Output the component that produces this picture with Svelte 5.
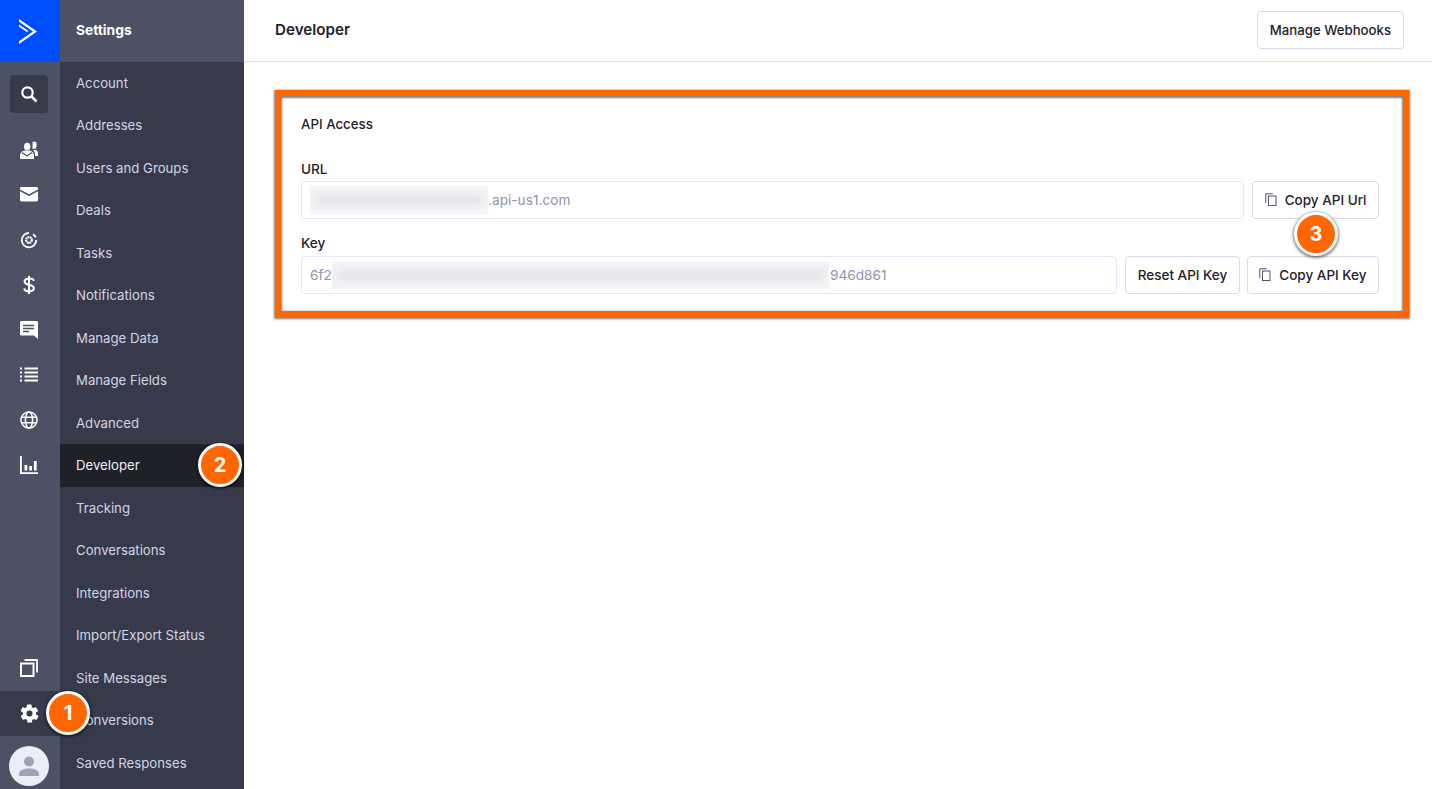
<script>
	const menu = [
		'Account', 'Addresses', 'Users and Groups', 'Deals', 'Tasks', 'Notifications',
		'Manage Data', 'Manage Fields', 'Advanced', 'Developer', 'Tracking', 'Conversations',
		'Integrations', 'Import/Export Status', 'Site Messages', 'Conversions', 'Saved Responses'
	];
</script>

<div class="page">
	<!-- icon rail -->
	<nav class="rail">
		<div class="logo">
			<svg width="18" height="25" viewBox="0 0 18 25" fill="#fff"><path d="M0 0 18 12.500 0 25v-2.800L14 12.500 0 2.800z"/><path d="M0 5.500 9.500 12 8 13 0 7.800z"/></svg>
		</div>
		<div class="search">
			<svg width="18" height="18" viewBox="0 0 18 18"><circle cx="7.500" cy="7.500" r="5.200" fill="none" stroke="#fff" stroke-width="2.200"/><path d="m11.500 11.500 5 5" stroke="#fff" stroke-width="2.600"/></svg>
		</div>
		<div class="rail-icons">
			<div class="ri"><svg width="18" height="18" viewBox="0 0 18 18" fill="#fff"><ellipse cx="7.200" cy="5.600" rx="3.200" ry="3.800"/><path d="M0 18v-3c0-3 2-5 4.500-5.500h5.400C12 10 14 12 14 15v3z"/><path d="M2 11.500 7 15l5-3.500" fill="none" stroke="#4c5166" stroke-width="1.200"/><path d="M12.500 1c2-1.200 4.200-.6 4.200 2.400 0 1.800-.6 3.200-1.200 4.400h-3.200c.4-2.400.4-4.600.2-6.800z"/><path d="M15.500 9c1.500.3 2.500 1.400 2.500 3v3h-2.800c-.1-2.200-.6-4.200-1.800-6z"/></svg></div>
			<div class="ri"><svg width="18" height="14.400" viewBox="0 0 20 16" fill="#fff"><path d="M1.500 0h17A1.500 1.500 0 0 1 20 1.500v1.200L10 8 0 2.700V1.500A1.500 1.500 0 0 1 1.500 0z"/><path d="M0 4.800 10 10l10-5.200v9.700a1.500 1.500 0 0 1-1.500 1.500h-17A1.500 1.500 0 0 1 0 14.500z"/></svg></div>
			<div class="ri"><svg width="18" height="18" viewBox="0 0 20 20"><path d="M10 2.200A8 8 0 1 0 18 10" fill="none" stroke="#fff" stroke-width="2"/><path d="M14.500 3.500A8 8 0 0 1 17.500 7" fill="none" stroke="#fff" stroke-width="2"/><circle cx="10" cy="10" r="3.200" fill="none" stroke="#fff" stroke-width="2.400" stroke-dasharray="2 .6"/></svg></div>
			<div class="ri"><svg width="12" height="18" viewBox="0 0 14 21"><path d="M12.500 5.800C12.300 3.800 10 3 7.200 3 4 3 1.800 4.200 1.800 6.400c0 5 10.800 2.800 10.800 8 0 2.400-2.400 3.600-5.500 3.600-3 0-5.300-1.200-5.600-3.500M7 0v21" fill="none" stroke="#fff" stroke-width="2.400"/></svg></div>
			<div class="ri"><svg width="18" height="18" viewBox="0 0 18 18"><path d="M1.500 0h15A1.500 1.500 0 0 1 18 1.500V18l-4-3.500H1.500A1.500 1.500 0 0 1 0 13V1.500A1.500 1.500 0 0 1 1.500 0z" fill="#fff"/><path d="M3 4.500h11M3 7.500h11M3 10.500h6" stroke="#4c5166" stroke-width="1.600"/></svg></div>
			<div class="ri"><svg width="18" height="15" viewBox="0 0 18 15"><path d="M4.500 1.500H18M4.500 5.500H18M4.500 9.500H18M4.500 13.500H18" stroke="#fff" stroke-width="2"/><path d="M0 1.500h2M0 5.500h2M0 9.500h2M0 13.500h2" stroke="#fff" stroke-width="2"/></svg></div>
			<div class="ri"><svg width="18" height="18" viewBox="0 0 19 19" fill="none" stroke="#fff" stroke-width="1.600"><circle cx="9.500" cy="9.500" r="8.500"/><ellipse cx="9.500" cy="9.500" rx="3.800" ry="8.500"/><path d="M1.500 6.500h16M1.500 12.500h16"/></svg></div>
			<div class="ri"><svg width="18" height="18" viewBox="0 0 18 18" fill="#fff"><path d="M0 0h1.800v16.200H18V18H0z"/><path d="M4.500 9h2.800v5.500H4.500zM9.200 10h2.800v4.500H9.200zM13.900 5h2.800v9.500h-2.800z"/></svg></div>
		</div>
		<div class="rail-bottom">
			<div class="ri pages"><svg width="18" height="18" viewBox="0 0 18 18" fill="none" stroke="#fff"><rect x="1" y="4.500" width="12.500" height="12.500" stroke-width="2"/><path d="M4.500 1H17v12.500" stroke-width="1.800"/></svg></div>
			<div class="ri gear"><svg width="21" height="21" viewBox="0 0 24 24" fill="#fff"><path fill-rule="evenodd" d="M19.400 13a7.700 7.700 0 0 0 0-2l2.200-1.700a.5.500 0 0 0 .1-.7l-2.100-3.600a.5.500 0 0 0-.6-.2l-2.600 1a7.600 7.600 0 0 0-1.700-1l-.4-2.700a.5.500 0 0 0-.5-.4H9.600a.5.500 0 0 0-.5.400l-.4 2.700a7.600 7.600 0 0 0-1.700 1l-2.600-1a.5.500 0 0 0-.6.200L2.200 8.600a.5.500 0 0 0 .1.700L4.500 11a7.700 7.700 0 0 0 0 2l-2.200 1.700a.5.500 0 0 0-.1.700l2.100 3.600a.5.500 0 0 0 .6.200l2.600-1a7.600 7.600 0 0 0 1.700 1l.4 2.700a.5.500 0 0 0 .5.400h4.200a.5.500 0 0 0 .5-.4l.4-2.700a7.600 7.600 0 0 0 1.700-1l2.600 1a.5.500 0 0 0 .6-.2l2.100-3.600a.5.500 0 0 0-.1-.7zM12 15.500a3.500 3.500 0 1 1 0-7 3.500 3.500 0 0 1 0 7z"/></svg></div>
			<div class="avatar">
				<svg width="22" height="20" viewBox="0 0 22 20" fill="#9da3b8"><circle cx="11" cy="5.500" r="5"/><path d="M1 20v-2.500c0-3 5-5 10-5s10 2 10 5V20z"/></svg>
			</div>
		</div>
	</nav>

	<!-- settings menu -->
	<aside class="side">
		<div class="side-head">Settings</div>
		<ul>
			{#each menu as item}
				<li class:active={item === 'Developer'}>{item}</li>
			{/each}
		</ul>
	</aside>

	<main>
		<header>
			<h1>Developer</h1>
			<button class="btn">Manage Webhooks</button>
		</header>

		<section class="highlight">
			<h2>API Access</h2>

			<div class="label first">URL</div>
			<div class="row">
				<div class="field"><span class="blur url"><i></i></span>.api-us1.com</div>
				<button class="btn">
					<svg width="12" height="13" viewBox="0 0 12 13" fill="none" stroke="#4f5468"><rect x="3.500" y="3" width="7.500" height="9.500"/><path d="M.8 10V.8h7"/></svg>
					Copy API Url
				</button>
			</div>

			<div class="label key-label">Key</div>
			<div class="row">
				<div class="field">6f2<span class="blur key"><i></i></span>946d861</div>
				<button class="btn plain">Reset API Key</button>
				<button class="btn">
					<svg width="12" height="13" viewBox="0 0 12 13" fill="none" stroke="#4f5468"><rect x="3.500" y="3" width="7.500" height="9.500"/><path d="M.8 10V.8h7"/></svg>
					Copy API Key
				</button>
			</div>
		</section>
	</main>

	<!-- numbered callouts -->
	<div class="callout one">1</div>
	<div class="callout two">2</div>
	<div class="callout three">3</div>
</div>

<style>
	:global(body) {
		margin: 0;
		background: #fff;
	}

	.page {
		position: relative;
		display: flex;
		height: 789px;
		overflow: hidden;
		font-family: 'Inter', 'Liberation Sans', sans-serif;
		font-size: 13.2px;
		color: #1f2129;
	}

	/* ---------- rail ---------- */
	.rail {
		width: 60px;
		flex: none;
		display: flex;
		flex-direction: column;
		background: #4c5166;
	}

	.logo {
		height: 62px;
		background: #004cff;
		display: flex;
		align-items: center;
		justify-content: center;
		padding-right: 4px;
		box-sizing: border-box;
	}

	.search {
		width: 38px;
		height: 38px;
		margin: 13px 0 0 10px;
		border-radius: 4px;
		background: #363a4a;
		display: flex;
		align-items: center;
		justify-content: center;
	}

	.rail-icons {
		margin-top: 14px;
	}

	.ri {
		height: 45px;
		width: 58px;
		display: flex;
		align-items: center;
		justify-content: center;
	}

	.rail-bottom {
		margin-top: auto;
	}

	.pages {
		height: 46px;
	}

	.gear {
		width: 60px;
		padding-right: 2px;
		box-sizing: border-box;
		background: #363a4a;
	}

	.avatar {
		width: 40px;
		height: 40px;
		border-radius: 50%;
		margin: 10px 0 3px 9px;
		background: #eceef6;
		display: flex;
		align-items: center;
		justify-content: center;
	}

	/* ---------- settings menu ---------- */
	.side {
		width: 184px;
		flex: none;
		background: #363a4a;
	}

	.side-head {
		height: 60px;
		padding: 0 0 2px 16px;
		display: flex;
		align-items: center;
		background: #4c5166;
		color: #fff;
		font-size: 13.8px;
		font-weight: 700;
	}

	ul {
		list-style: none;
		margin: -0.5px 0 0;
		padding: 0;
	}

	li {
		height: 42.5px;
		line-height: 42.5px;
		padding-left: 16px;
		color: #d3d6e3;
	}

	li.active {
		background: #1f2129;
		color: #eceef6;
	}

	/* ---------- main ---------- */
	main {
		flex: 1;
		min-width: 0;
	}

	header {
		height: 59px;
		border-bottom: 1px solid #dfe1ea;
		padding: 0 28px 2px 31px;
		display: flex;
		align-items: center;
		justify-content: space-between;
	}

	h1 {
		margin: 0;
		font-size: 15.2px;
		font-weight: 600;
	}

	.btn {
		height: 38px;
		padding: 0 12px;
		display: inline-flex;
		align-items: center;
		gap: 8px;
		flex: none;
		background: #fff;
		border: 1px solid #d9dce8;
		border-radius: 4px;
		font: inherit;
		font-weight: 500;
		color: #1f2129;
		white-space: nowrap;
	}

	.highlight {
		margin: 28px 23px 0 31px;
		height: 227px;
		box-sizing: border-box;
		border: 6px solid #ff6600;
		padding: 20px 24px 0 20px;
		box-shadow: 0 1px 2px 1px rgba(0, 0, 0, 0.5), inset 0 1px 2px 1px rgba(0, 0, 0, 0.5);
	}

	h2 {
		margin: 0;
		font-size: 13.3px;
		font-weight: 500;
		line-height: 17px;
	}

	.label {
		font-size: 13.6px;
		font-weight: 500;
		line-height: 18px;
		margin: 1px 0 3px;
	}

	.label.first {
		margin-top: 27px;
	}

	.label.key-label {
		margin-bottom: 4px;
	}

	.row {
		display: flex;
		gap: 8px;
		height: 37.5px;
		margin-bottom: 15.5px;
	}

	.row .btn {
		height: 37.5px;
		padding: 0 11.5px;
		font-size: 13.5px;
	}

	.field {
		flex: 1;
		height: 37.5px;
		box-sizing: border-box;
		border: 1px solid #e3e8f6;
		border-radius: 4px;
		padding-left: 8px;
		display: flex;
		align-items: center;
		font-size: 13.7px;
		color: #8f94a8;
	}

	.blur {
		flex: none;
		height: 28px;
		overflow: hidden;
		background: #f5f5f7;
	}

	.blur i {
		display: block;
		height: 10px;
		margin: 9px 4px;
		background: #e2e3e7;
		filter: blur(4px);
	}

	.blur.url {
		width: 178px;
	}

	.blur.key {
		width: 497px;
		margin-right: 1px;
	}

	.btn.plain {
		margin-right: -1px;
	}

	/* ---------- callouts ---------- */
	.callout {
		position: absolute;
		width: 38px;
		height: 38px;
		border: 3px solid #fff;
		border-radius: 50%;
		background: #ff6600;
		color: #fff;
		font-size: 20px;
		font-weight: 700;
		display: flex;
		align-items: center;
		justify-content: center;
		box-shadow: 0 1px 3px 1px rgba(0, 0, 0, 0.5);
	}

	.one {
		left: 46px;
		top: 691px;
	}

	.two {
		left: 198px;
		top: 443px;
	}

	.three {
		left: 1294px;
		top: 212px;
	}
</style>
